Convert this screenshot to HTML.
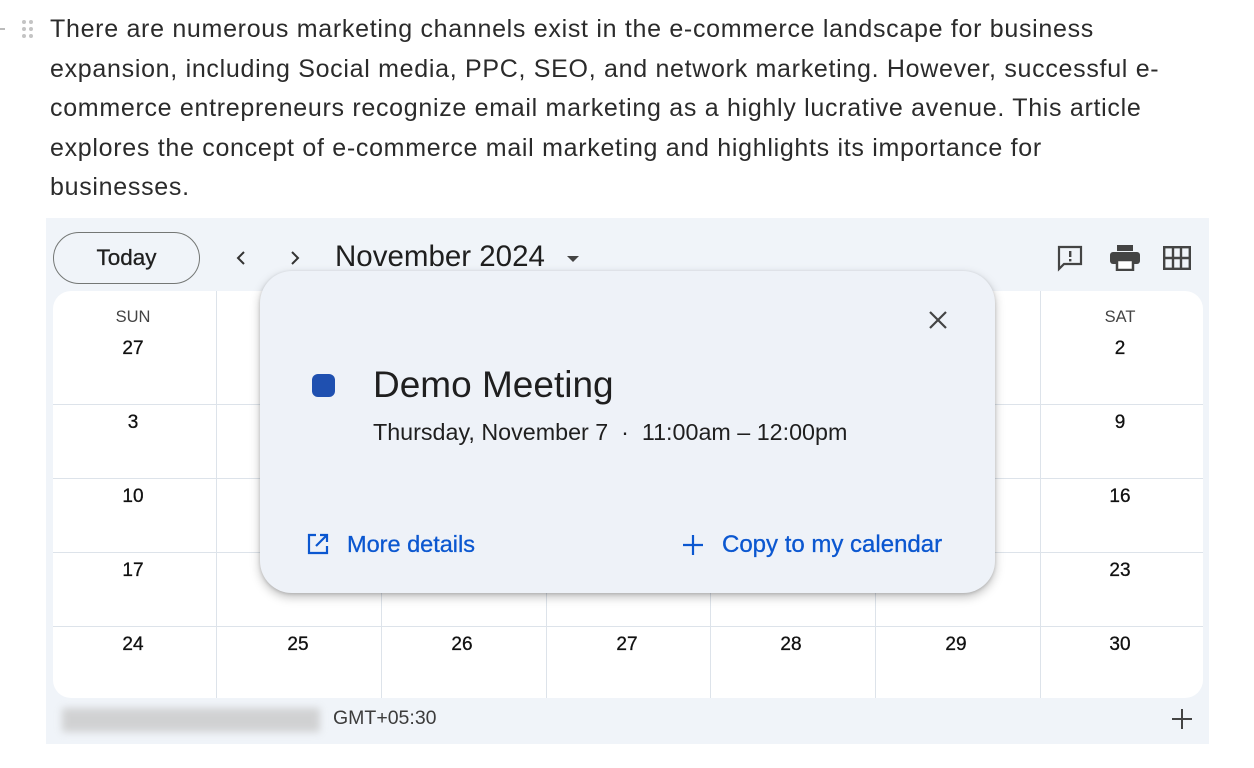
<!DOCTYPE html>
<html><head><meta charset="utf-8"><style>
*{margin:0;padding:0;box-sizing:border-box}
body{width:1254px;height:768px;background:#fff;font-family:"Liberation Sans",Arial,sans-serif;position:relative;overflow:hidden;color:#1f1f1f}
.p{position:absolute;left:50px;top:10px;font-size:25px;letter-spacing:0.7px;line-height:39.5px;color:#2b2b2b;white-space:nowrap}
.dots{position:absolute;left:22px;top:20px}
.dots i{position:absolute;width:4px;height:4px;border-radius:50%;background:#c4c4c4}
.cal{position:absolute;left:46px;top:218px;width:1163px;height:526px;background:#f0f4f9}
.grid{position:absolute;left:7px;top:73px;width:1150px;height:407px;background:#fff;border-radius:18px;overflow:hidden}
.vl{position:absolute;top:0;bottom:0;width:1px;background:#dde3ea}
.hl{position:absolute;left:0;right:0;height:1px;background:#dde3ea}
.c{position:absolute;width:164px;text-align:center;font-size:19px;color:#111;-webkit-text-stroke:0.3px #111}
.h{position:absolute;width:164px;text-align:center;font-size:16.5px;color:#444}
.today{position:absolute;left:7px;top:14px;width:147px;height:52px;border:1.3px solid #747775;border-radius:26px;text-align:center;line-height:50px;font-size:22.5px;color:#1f1f1f;-webkit-text-stroke:0.3px #1f1f1f}
.pop{position:absolute;left:260px;top:271px;width:735px;height:322px;background:#eef2f8;border-radius:32px;box-shadow:0 4px 10px rgba(0,0,0,.25),0 1px 3px rgba(0,0,0,.15)}
.blue{color:#0b57d0}
</style></head><body>
<div style="position:absolute;left:0;top:28px;width:5px;height:1.5px;background:#bbb"></div>
<div class="dots"><i style="left:0;top:0"></i><i style="left:7px;top:0"></i><i style="left:0;top:7px"></i><i style="left:7px;top:7px"></i><i style="left:0;top:14px"></i><i style="left:7px;top:14px"></i></div>
<div class="p">There are numerous marketing channels exist in the e-commerce landscape for business<br>expansion, including Social media, PPC, SEO, and network marketing. However, successful e-<br>commerce entrepreneurs recognize email marketing as a highly lucrative avenue. This article<br>explores the concept of e-commerce mail marketing and highlights its importance for<br>businesses.</div>

<div class="cal">
 <div class="today">Today</div>
 <svg style="position:absolute;left:188px;top:31px" width="14" height="18" viewBox="0 0 14 18"><path d="M10 3 L4 9 L10 15" fill="none" stroke="#333" stroke-width="2"/></svg>
 <svg style="position:absolute;left:242px;top:31px" width="14" height="18" viewBox="0 0 14 18"><path d="M4 3 L10 9 L4 15" fill="none" stroke="#333" stroke-width="2"/></svg>
 <div style="position:absolute;left:289px;top:22px;font-size:29.5px;color:#1f1f1f">November 2024</div>
 <svg style="position:absolute;left:520px;top:37px" width="14" height="8"><path d="M1 1 L13 1 L7 7Z" fill="#444"/></svg>
 <svg style="position:absolute;left:1010px;top:26px" width="28" height="28" viewBox="0 0 28 28"><path d="M3 3 H25 V20 H8 L3 25 Z" fill="none" stroke="#444" stroke-width="2.2"/><rect x="13" y="7" width="2.4" height="6" fill="#444"/><rect x="13" y="15" width="2.4" height="2.4" fill="#444"/></svg>
 <svg style="position:absolute;left:1064px;top:27px" width="30" height="26" viewBox="0 0 30 26"><rect x="7" y="0" width="16" height="6" fill="#444"/><rect x="0" y="7" width="30" height="12" rx="3" fill="#444"/><rect x="7" y="15" width="16" height="10" fill="#fff" stroke="#444" stroke-width="2.5"/></svg>
 <svg style="position:absolute;left:1117px;top:28px" width="28" height="24" viewBox="0 0 28 24"><rect x="1.2" y="1.2" width="25.6" height="21.6" fill="none" stroke="#444" stroke-width="2.4"/><path d="M10 1 V23 M18 1 V23 M1 12 H27" stroke="#444" stroke-width="2.4"/></svg>
 <div class="grid">
  <div class="vl" style="left:163px"></div><div class="vl" style="left:328px"></div><div class="vl" style="left:493px"></div><div class="vl" style="left:657px"></div><div class="vl" style="left:822px"></div><div class="vl" style="left:987px"></div>
  <div class="hl" style="top:113px"></div><div class="hl" style="top:187px"></div><div class="hl" style="top:261px"></div><div class="hl" style="top:335px"></div>
  <div class="h" style="left:-2px;top:17px">SUN</div><div class="h" style="left:985px;top:17px">SAT</div>
  <div class="c" style="left:-2px;top:47px">27</div><div class="c" style="left:985px;top:47px">2</div>
  <div class="c" style="left:-2px;top:121px">3</div><div class="c" style="left:985px;top:121px">9</div>
  <div class="c" style="left:-2px;top:195px">10</div><div class="c" style="left:985px;top:195px">16</div>
  <div class="c" style="left:-2px;top:269px">17</div><div class="c" style="left:985px;top:269px">23</div>
  <div class="c" style="left:-2px;top:343px">24</div><div class="c" style="left:163px;top:343px">25</div><div class="c" style="left:327px;top:343px">26</div><div class="c" style="left:492px;top:343px">27</div><div class="c" style="left:656px;top:343px">28</div><div class="c" style="left:821px;top:343px">29</div><div class="c" style="left:985px;top:343px">30</div>
 </div>
 <div style="position:absolute;left:16px;top:490px;width:258px;height:24px;background:#c9c9c9;filter:blur(4px);opacity:.8"></div>
 <div style="position:absolute;left:287px;top:489px;font-size:19.5px;color:#3c3c3c">GMT+05:30</div>
 <svg style="position:absolute;left:1125px;top:490px" width="22" height="22"><path d="M11 1 V21 M1 11 H21" stroke="#444" stroke-width="2"/></svg>
</div>

<div class="pop">
 <svg style="position:absolute;left:668px;top:39px" width="20" height="20"><path d="M2 2 L18 18 M18 2 L2 18" stroke="#444" stroke-width="2.2"/></svg>
 <div style="position:absolute;left:52px;top:103px;width:23px;height:23px;border-radius:6px;background:#1f50b0"></div>
 <div style="position:absolute;left:113px;top:93px;font-size:37px;color:#1f1f1f">Demo Meeting</div>
 <div style="position:absolute;left:113px;top:148px;font-size:23.3px;color:#1f1f1f;white-space:pre">Thursday, November 7  ·  11:00am – 12:00pm</div>
 <svg style="position:absolute;left:47px;top:262px" width="22" height="22" viewBox="0 0 22 22"><path d="M9 2 H2 V20 H20 V13" fill="none" stroke="#0b57d0" stroke-width="2.2"/><path d="M13 2 H20 V9 M20 2 L9 13" fill="none" stroke="#0b57d0" stroke-width="2.2"/></svg>
 <div class="blue" style="position:absolute;left:87px;top:260px;font-size:23.5px;-webkit-text-stroke:0.3px #0b57d0">More details</div>
 <svg style="position:absolute;left:422px;top:263px" width="22" height="22"><path d="M11 1 V21 M1 11 H21" stroke="#0b57d0" stroke-width="2.2"/></svg>
 <div class="blue" style="position:absolute;left:462px;top:260px;font-size:24px;-webkit-text-stroke:0.3px #0b57d0">Copy to my calendar</div>
</div>
</body></html>
